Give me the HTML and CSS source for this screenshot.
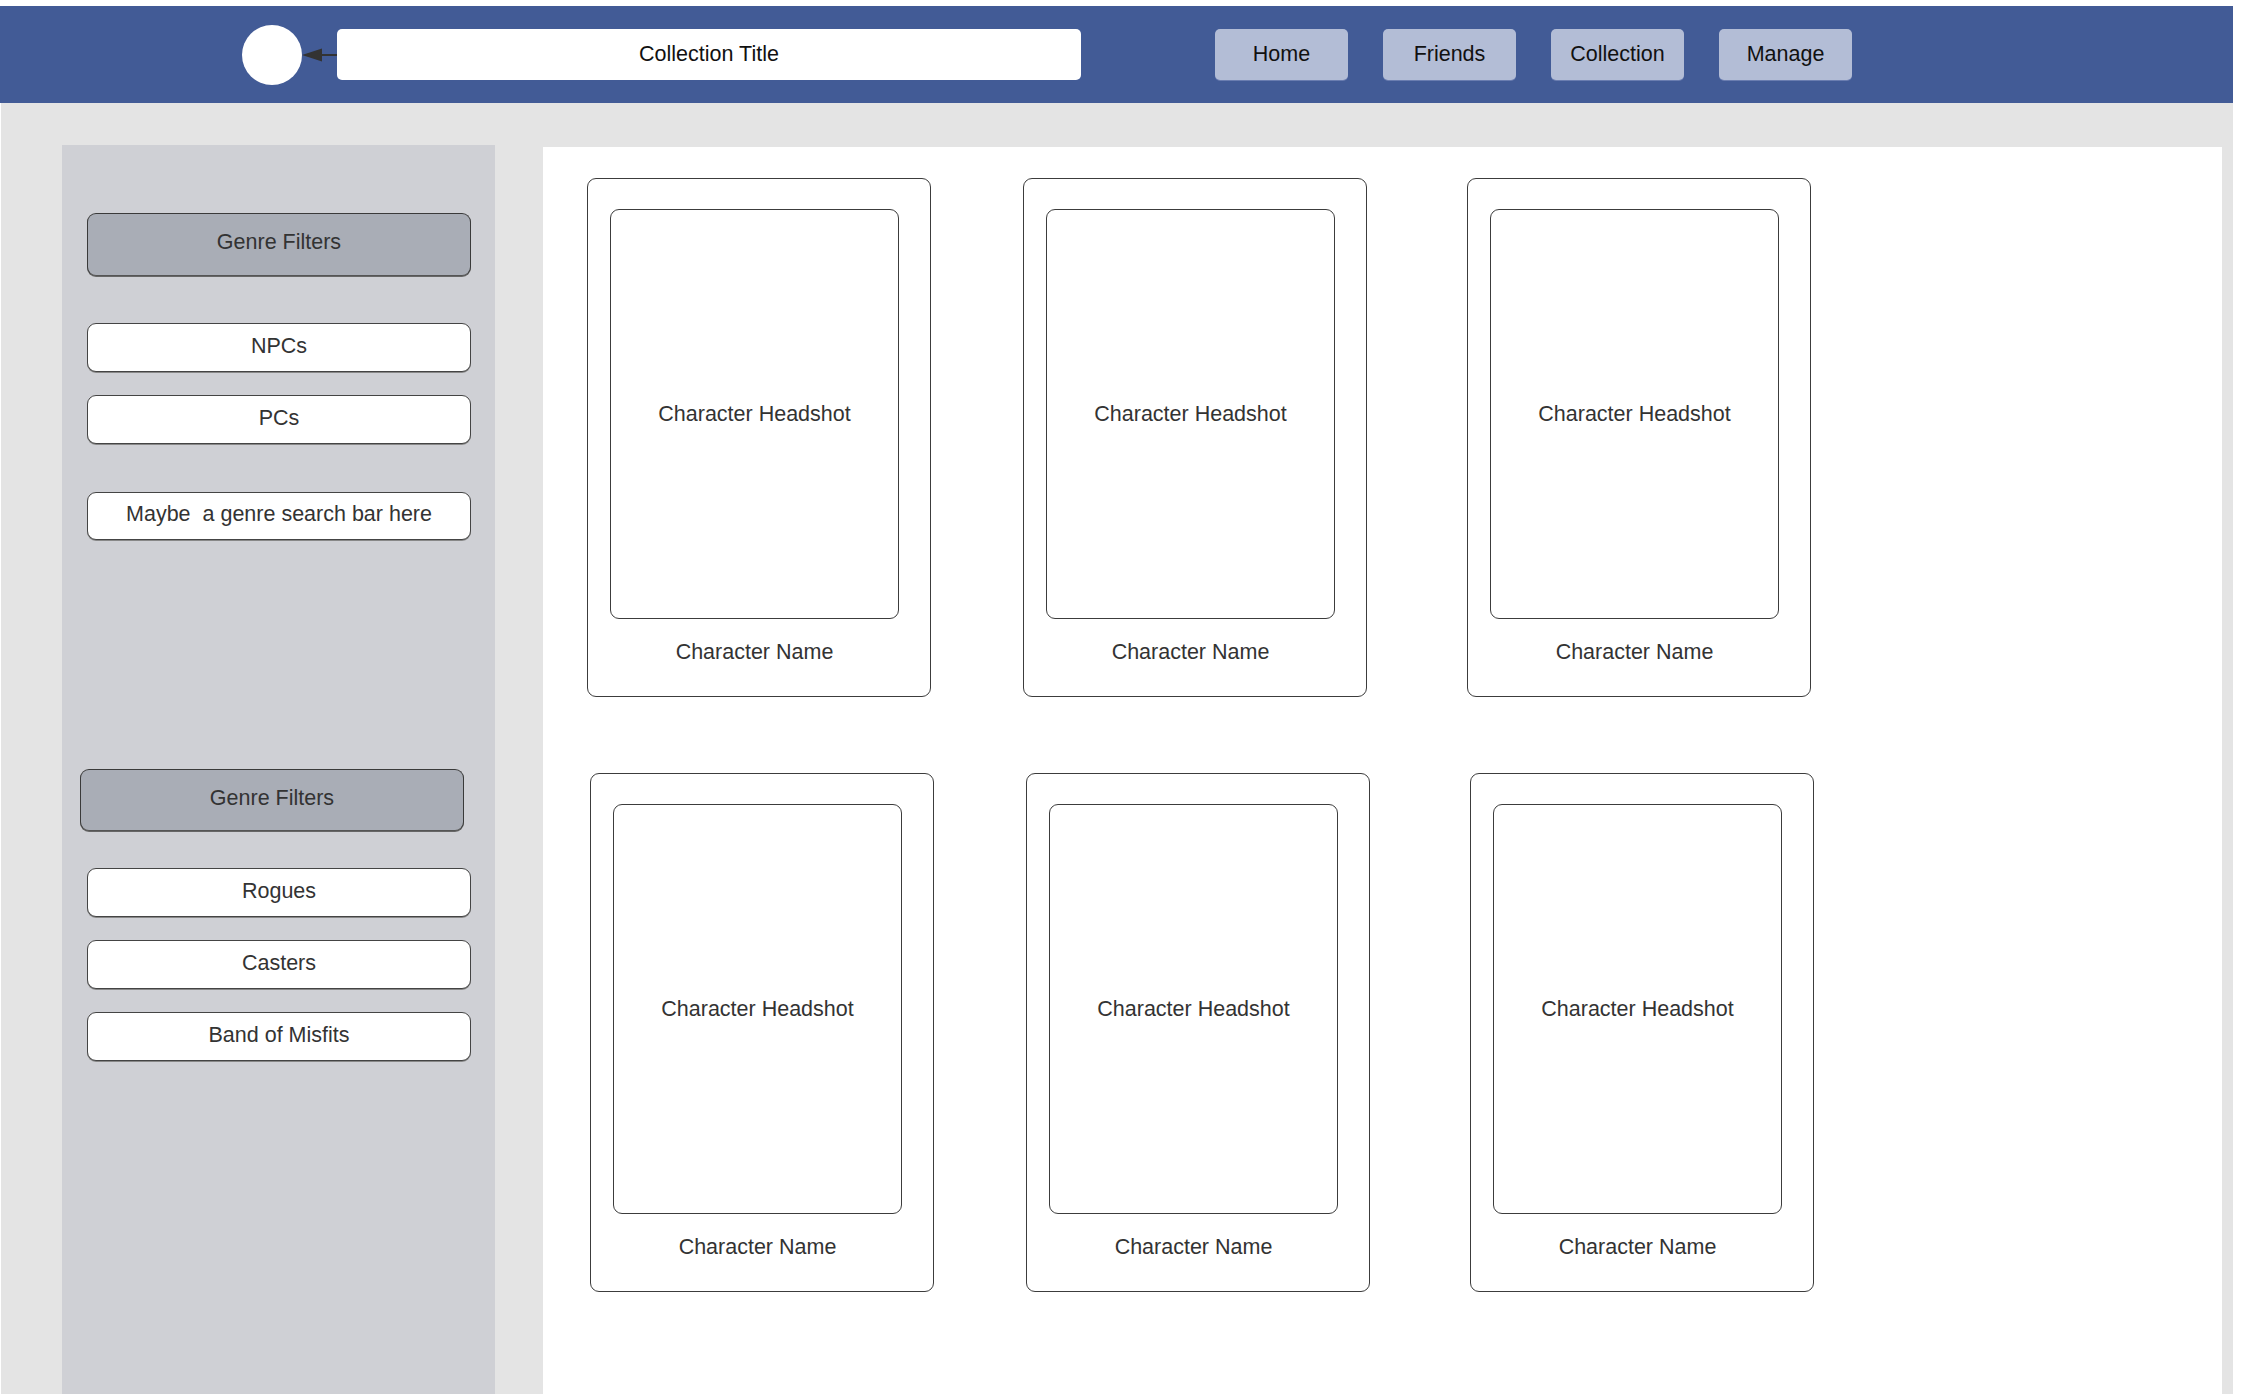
FILE: index.html
```html
<!DOCTYPE html>
<html lang="en">

<head>
    <meta charset="UTF-8">
    <meta name="viewport" content="width=device-width, initial-scale=1.0">
    <title>Character Collection</title>
    <link rel="stylesheet" href="styles.css">
</head>

<body>
    <div class="page">
        <header class="topbar">
            <div class="avatar"></div>
            <svg class="arrow" width="35" height="14" viewBox="0 0 35 14">
                <polygon points="0,7 20,0.5 20,13.5" fill="#333"></polygon>
                <line x1="19" y1="7" x2="35" y2="7" stroke="#333" stroke-width="2"></line>
            </svg>
            <div class="title-box">Collection Title</div>
            <nav class="nav">
                <a class="nav-btn" href="#">Home</a>
                <a class="nav-btn" href="#">Friends</a>
                <a class="nav-btn" href="#">Collection</a>
                <a class="nav-btn" href="#">Manage</a>
            </nav>
        </header>

        <div class="main">
            <aside class="sidebar">
                <div class="filter-head">Genre Filters</div>
                <div class="filter-list first">
                    <button class="filter-btn">NPCs</button>
                    <button class="filter-btn">PCs</button>
                </div>
                <div class="filter-btn search">Maybe &nbsp;a genre search bar here</div>

                <div class="filter-head second">Genre Filters</div>
                <div class="filter-list">
                    <button class="filter-btn">Rogues</button>
                    <button class="filter-btn">Casters</button>
                    <button class="filter-btn">Band of Misfits</button>
                </div>
            </aside>

            <section class="content">
                <div class="card-row">
                    <div class="card">
                        <div class="headshot">Character Headshot</div>
                        <div class="name">Character Name</div>
                    </div>
                    <div class="card">
                        <div class="headshot">Character Headshot</div>
                        <div class="name">Character Name</div>
                    </div>
                    <div class="card">
                        <div class="headshot">Character Headshot</div>
                        <div class="name">Character Name</div>
                    </div>
                </div>
                <div class="card-row shifted">
                    <div class="card">
                        <div class="headshot">Character Headshot</div>
                        <div class="name">Character Name</div>
                    </div>
                    <div class="card">
                        <div class="headshot">Character Headshot</div>
                        <div class="name">Character Name</div>
                    </div>
                    <div class="card">
                        <div class="headshot">Character Headshot</div>
                        <div class="name">Character Name</div>
                    </div>
                </div>
            </section>
        </div>
    </div>
</body>

</html>
```

FILE: styles.css
```css
html,
body {
    height: 100%;
}

body {
    margin: 0;
    background-color: #fff;
    font-family: "Liberation Sans", Arial, sans-serif;
    font-size: 21.5px;
    overflow: hidden;
}

.page {
    width: 2233px;
    height: calc(100vh - 6px);
    margin-top: 6px;
    display: flex;
    flex-direction: column;
    background-color: #e4e4e4;
}

/* top bar */
.topbar {
    height: 97px;
    flex-shrink: 0;
    display: flex;
    align-items: center;
    padding-left: 242px;
    background-color: #425b96;
}

.avatar {
    width: 60px;
    height: 60px;
    border-radius: 50%;
    background-color: #fff;
}

.arrow {
    display: block;
}

.title-box {
    width: 744px;
    height: 51px;
    display: flex;
    align-items: center;
    justify-content: center;
    background-color: #fff;
    border-radius: 5px;
    color: #111;
}

.nav {
    display: flex;
    gap: 35px;
    margin-left: 134px;
}

.nav-btn {
    width: 133px;
    height: 51px;
    display: flex;
    align-items: center;
    justify-content: center;
    background-color: #b3bdd6;
    border-radius: 5px;
    box-shadow: 0 1px 0 #6a7db0;
    color: #111;
    text-decoration: none;
}

/* main area */
.main {
    flex: 1;
    display: flex;
    gap: 48px;
    padding: 42px 11px 0 61px;
    border-left: 1px solid #fff;
    min-height: 0;
}

.sidebar {
    width: 433px;
    flex-shrink: 0;
    box-sizing: border-box;
    padding: 68px 0 0 25px;
    background-color: #cfd0d5;
}

.filter-head {
    width: 384px;
    height: 63px;
    box-sizing: border-box;
    display: flex;
    align-items: center;
    justify-content: center;
    padding-bottom: 4px;
    background-color: #a9adb6;
    border: 1px solid #3a3a3a;
    border-bottom-color: #555;
    border-radius: 9px;
    box-shadow: 0 1px 0 #666;
    color: #333;
}

.filter-head.second {
    height: 62px;
    margin-top: 229px;
    margin-left: -7px;
}

.filter-list {
    display: flex;
    flex-direction: column;
    gap: 23px;
    margin-top: 37px;
}

.filter-list.first {
    margin-top: 47px;
}

.filter-btn {
    width: 384px;
    height: 49px;
    box-sizing: border-box;
    display: flex;
    align-items: center;
    justify-content: center;
    padding: 0 0 3px;
    background-color: #fff;
    border: 1px solid #444;
    border-radius: 9px;
    box-shadow: 0 1px 0 #888;
    font-family: inherit;
    font-size: inherit;
    color: #333;
}

.filter-btn.search {
    margin-top: 48px;
    height: 48px;
}

/* cards */
.content {
    flex: 1;
    margin-top: 2px;
    box-sizing: border-box;
    padding: 31px 0 0 44px;
    background-color: #fff;
}

.card-row {
    display: flex;
    gap: 92px;
}

.card-row .card:nth-child(3) {
    margin-left: 8px;
}

.card-row.shifted {
    margin-top: 76px;
    padding-left: 3px;
}

.card {
    width: 344px;
    height: 519px;
    box-sizing: border-box;
    padding: 30px 31px 0 22px;
    border: 1px solid #3c3c3c;
    border-radius: 9px;
    color: #333;
}

.headshot {
    height: 410px;
    box-sizing: border-box;
    display: flex;
    align-items: center;
    justify-content: center;
    border: 1px solid #3c3c3c;
    border-radius: 9px;
}

.name {
    margin-top: 20px;
    line-height: 26px;
    text-align: center;
}
```
